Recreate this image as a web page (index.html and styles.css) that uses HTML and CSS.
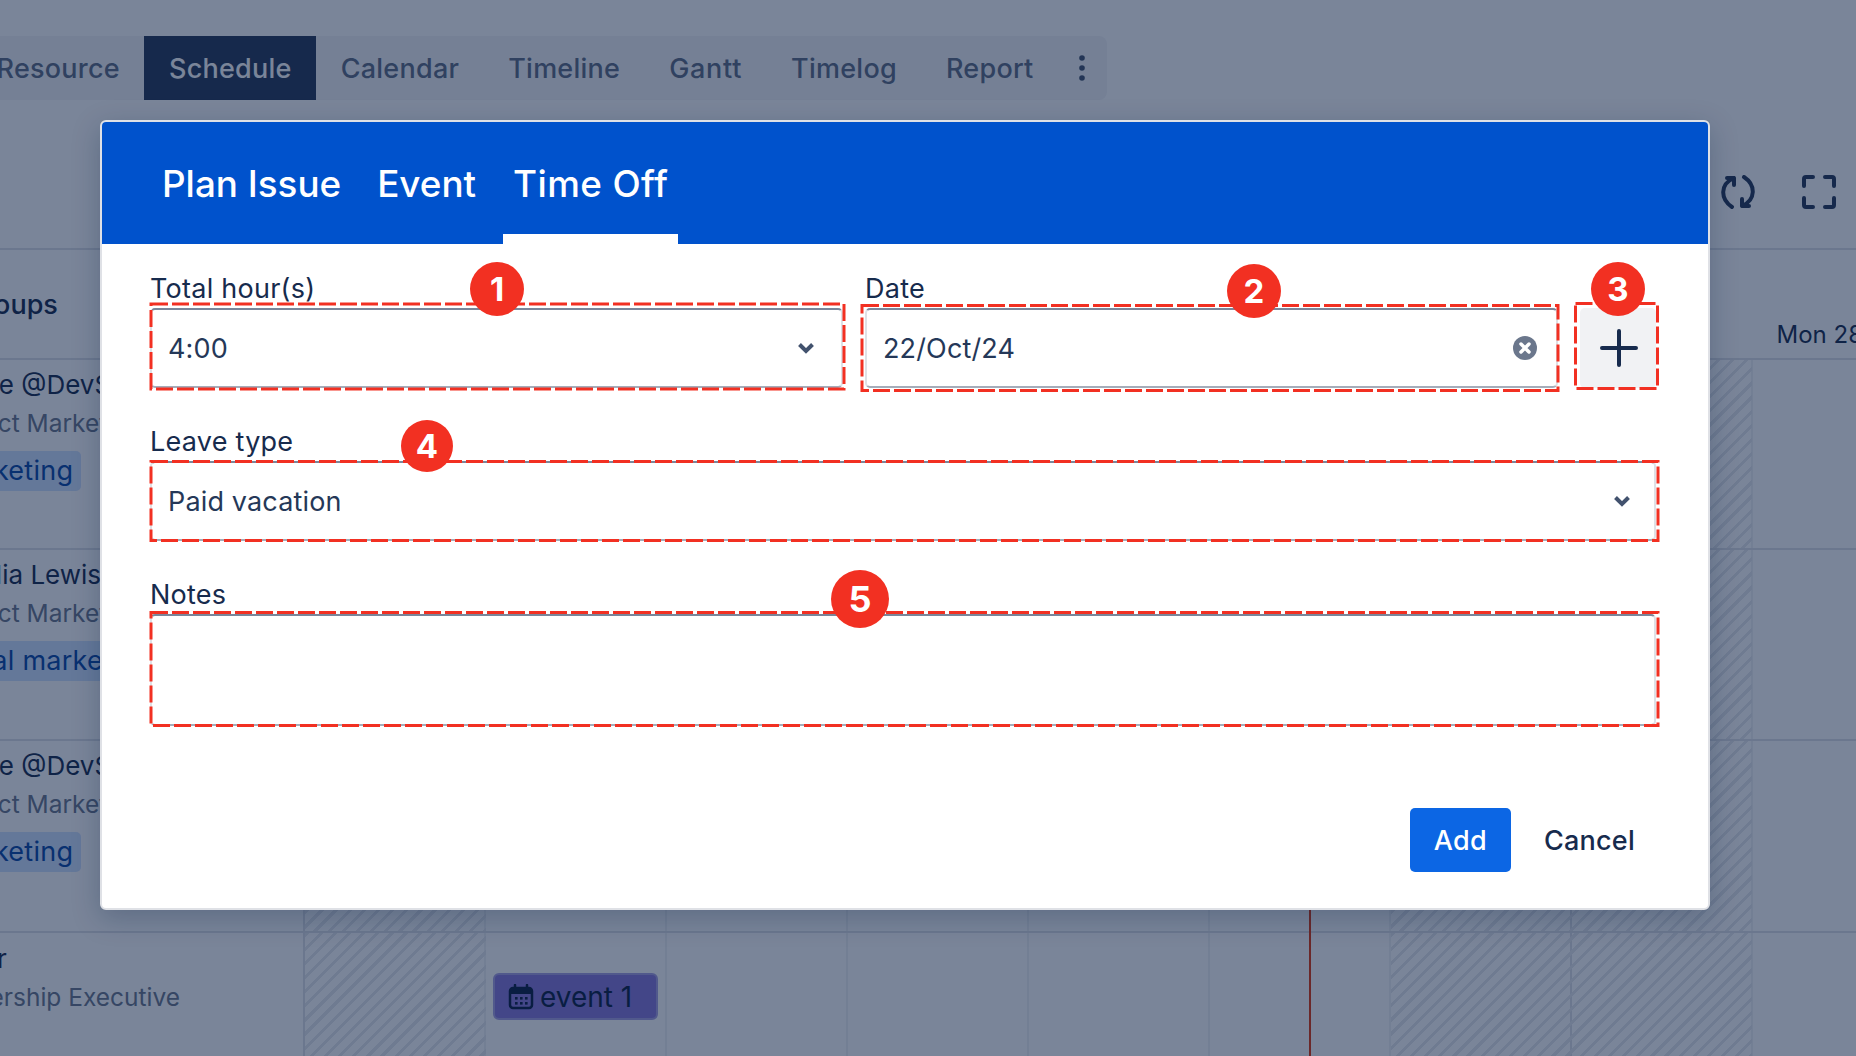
FILE: index.html
```html
<!DOCTYPE html>
<html lang="en">
<head>
<meta charset="utf-8">
<title>Plan Time Off</title>
<link rel="stylesheet" href="styles.css">
</head>
<body>
<div class="page">
  <nav class="nav">
    <a class="nav-item">Resource</a>
    <a class="nav-item active">Schedule</a>
    <a class="nav-item">Calendar</a>
    <a class="nav-item">Timeline</a>
    <a class="nav-item wide">Gantt</a>
    <a class="nav-item">Timelog</a>
    <a class="nav-item">Report</a>
    <svg class="nav-more" width="8" height="26" viewBox="0 0 8 26"><circle cx="4" cy="3" r="2.800"/><circle cx="4" cy="13" r="2.800"/><circle cx="4" cy="23" r="2.800"/></svg>
  </nav>
  <div class="controls">
    <svg class="ctl" width="34" height="34" viewBox="0 0 34 34"><path d="M6 3H13V10M13 3C-1 9-1 24 11 32"/><path d="M28 31H21V24M21 31C35 25 35 10 23 2"/></svg>
    <svg class="ctl" width="34" height="34" viewBox="0 0 34 34"><path d="M2 11V4a2 2 0 0 1 2-2h7M23 2h7a2 2 0 0 1 2 2v7M32 23v7a2 2 0 0 1-2 2h-7M11 32H4a2 2 0 0 1-2-2v-7"/></svg>
  </div>
  <div class="grid-head">
    <div class="head-left"><span class="groups">Groups</span></div>
    <div class="head-right"><span class="day-label">Mon 28</span></div>
  </div>
  <section class="row row-a">
    <div class="who"><div class="name">Jane @DevSamurai</div><div class="role">Product Marketing</div><span class="tag">Marketing</span></div>
    <div class="track"></div>
  </section>
  <section class="row row-b">
    <div class="who"><div class="name">Amelia Lewis</div><div class="role">Product Marketing</div><span class="tag">Digital marketing</span></div>
    <div class="track"></div>
  </section>
  <section class="row row-c">
    <div class="who"><div class="name">Jane @DevSamurai</div><div class="role">Product Marketing</div><span class="tag">Marketing</span></div>
    <div class="track"></div>
  </section>
  <section class="row row-d">
    <div class="who last"><div class="name">Peter</div><div class="role">Partnership Executive</div></div>
    <div class="track">
      <span class="chip">
        <svg width="26" height="26" viewBox="0 0 26 26"><path class="cal" d="M7 1v4M19 1v4"/><rect class="cal" x="2" y="4" width="22" height="20" rx="3"/><rect class="cal-fill" x="2" y="4" width="22" height="6"/><g class="cal-dots"><rect x="7" y="13" width="2.6" height="2.6"/><rect x="12" y="13" width="2.6" height="2.6"/><rect x="17" y="13" width="2.6" height="2.6"/><rect x="7" y="18" width="2.6" height="2.6"/><rect x="12" y="18" width="2.6" height="2.6"/><rect x="17" y="18" width="2.6" height="2.6"/></g></svg>
        event 1
      </span>
    </div>
  </section>
  <div class="today"></div>

  <div class="blanket"></div>

  <div class="modal">
    <header class="modal-head">
      <span class="tab">Plan Issue</span>
      <span class="tab">Event</span>
      <span class="tab current">Time Off</span>
    </header>
    <form class="modal-body">
      <div class="line-one">
        <div class="group">
          <label class="label">Total hour(s)</label>
          <div class="field"><span>4:00</span><svg class="chev" width="18" height="12" viewBox="0 0 18 12"><path d="M2.500 2.500 9 9l6.500-6.500"/></svg></div>
        </div>
        <div class="group">
          <label class="label">Date</label>
          <div class="field date"><span>22/Oct/24</span><svg class="clear" width="24" height="24" viewBox="0 0 24 24"><circle cx="12" cy="12" r="12"/><path d="M8 8l8 8M16 8l-8 8"/></svg></div>
        </div>
        <button type="button" class="plus"><svg width="38" height="38" viewBox="0 0 38 38"><path d="M19 2v34M2 19h34"/></svg></button>
      </div>
      <div class="group spaced">
        <label class="label">Leave type</label>
        <div class="field leave"><span>Paid vacation</span><svg class="chev" width="18" height="12" viewBox="0 0 18 12"><path d="M2.500 2.500 9 9l6.500-6.500"/></svg></div>
      </div>
      <div class="group spaced">
        <label class="label">Notes</label>
        <div class="notes"></div>
      </div>
      <div class="actions">
        <button type="button" class="btn primary">Add</button>
        <button type="button" class="btn link">Cancel</button>
      </div>
    </form>
  </div>

  <svg class="marks" width="1856" height="1056" viewBox="0 0 1856 1056">
    <rect x="151" y="304" width="693" height="85"/>
    <rect x="862" y="305.500" width="696" height="85"/>
    <rect x="1575.500" y="303.500" width="82" height="85"/>
    <rect x="151" y="461.500" width="1507" height="79"/>
    <rect x="151" y="612.500" width="1507" height="113"/>
  </svg>
  <span class="badge b1">1</span>
  <span class="badge b2">2</span>
  <span class="badge b3">3</span>
  <span class="badge b4">4</span>
  <span class="badge b5">5</span>
</div>
</body>
</html>
```
FILE: styles.css
```css
* { box-sizing: border-box; }
html, body { margin: 0; padding: 0; }
body { font-family: Inter, "Liberation Sans", sans-serif; color: #172b4d; background: #fff; }
.page { position: relative; width: 1856px; height: 1056px; overflow: hidden; background: #fff; }

/* backdrop page */
.nav { display: flex; align-items: center; width: 1107px; height: 64px; margin-top: 36px; background: #f4f5f7; border-radius: 0 8px 8px 0; overflow: hidden; }
.nav-item { flex: none; height: 64px; line-height: 66px; padding: 0 24.500px; font-size: 27px; letter-spacing: .25px; font-weight: 500; color: #5e6c84; }
.nav-item:first-child { margin-left: -28px; }
.nav-item.active { background: #253858; color: #fff; }
.nav-item.wide { letter-spacing: .7px; }
.nav-more { margin-left: 20px; fill: #42526e; }
.controls { display: flex; justify-content: flex-end; align-items: center; gap: 47px; height: 150px; padding: 35px 20px 0 0; border-bottom: 2px solid #dfe1e6; }
.ctl { fill: none; stroke: #253858; stroke-width: 4; stroke-linecap: round; stroke-linejoin: round; }
.grid-head { display: grid; grid-template-columns: 305px 1fr; height: 110px; border-bottom: 2px solid #dfe1e6; }
.head-left { padding: 38px 0 0; overflow: hidden; border-right: 2px solid #dfe1e6; }
.groups { display: block; margin-left: -36px; font-size: 27px; font-weight: 500; }
.head-right { display: flex; justify-content: flex-end; padding-top: 70px; overflow: hidden; }
.day-label { font-size: 24px; white-space: nowrap; margin-right: -7px; }
.row { display: grid; grid-template-columns: 305px 1fr; border-bottom: 2px solid #dfe1e6; }
.row-a { height: 190px; }
.row-b { height: 191px; }
.row-c { height: 192px; }
.row-d { height: 123px; border-bottom: 0; }
.who { padding-top: 7px; overflow: hidden; white-space: nowrap; border-right: 2px solid #dfe1e6; }
.name { font-size: 26px; line-height: 36px; margin-left: -46px; }
.row-b .name { margin-left: -60px; }
.role { font-size: 24.500px; line-height: 36px; margin-top: 2px; margin-left: -71px; color: #6b778c; }
.tag { display: inline-block; margin-top: 10px; margin-left: -65px; padding: 0 8px; height: 40px; line-height: 40px; font-size: 27px; letter-spacing: .25px; border-radius: 5px; background: #d0e2ff; color: #0747a6; }
.row-b .tag { margin-left: -75px; }
.who.last { padding-top: 8px; }
.who.last .name { margin-left: -58px; }
.who.last .role { margin-left: -72px; }
.track {
  background-image:
    repeating-linear-gradient(135deg, #e8e9ed 0 3px, transparent 3px 10px),
    repeating-linear-gradient(135deg, #e8e9ed 0 3px, transparent 3px 10px),
    linear-gradient(#dfe1e6, #dfe1e6),
    repeating-linear-gradient(90deg, transparent 0 179px, #f0f1f4 179px 181px);
  background-size: 181px 100%, 361px 100%, 2px 100%, 100% 100%;
  background-position: 0 0, 1086px 0, 1265px 0, 0 0;
  background-repeat: no-repeat;
}
.chip { display: inline-flex; align-items: center; gap: 6px; height: 47px; margin: 40px 0 0 188px; padding: 0 24px 0 13px; font-size: 28px; border-radius: 6px; background: #8777d9; border: 2px solid #a79fe3; color: #091e42; }
.chip svg { flex: none; }
.cal { fill: none; stroke: #091e42; stroke-width: 2.500; stroke-linecap: round; }
.cal-fill { fill: #091e42; }
.cal-dots { fill: #091e42; }
.today { position: absolute; left: 1309px; top: 250px; bottom: 0; width: 2px; background: #de350b; }

.blanket { position: absolute; inset: 0; background: rgba(9, 30, 66, .54); }

/* dialog */
.modal { position: absolute; left: 100px; top: 120px; width: 1610px; height: 790px; background: #fff; border: 2px solid #dfe1e6; border-radius: 6px; overflow: hidden; box-shadow: 0 8px 28px rgba(9, 30, 66, .25); }
.modal-head { display: flex; gap: 16px; height: 122px; padding-left: 50px; background: #0052cc; }
.tab { display: flex; align-items: center; padding: 10px 10px 0; font-size: 36.800px; font-weight: 500; color: #fff; border-bottom: 10px solid transparent; }
.tab.current { margin-left: 1px; letter-spacing: .4px; border-bottom-color: #fff; }
.modal-body { display: block; padding: 29px 52px 0 48px; }
.line-one { display: grid; grid-template-columns: 693px 693px 76px; column-gap: 22px; align-items: end; }
.group { display: block; }
.spaced { margin-top: 38px; }
.label { display: block; height: 32px; line-height: 32px; margin-bottom: 3px; font-size: 27px; letter-spacing: .25px; color: #172b4d; }
.field { display: flex; align-items: center; justify-content: space-between; height: 80px; padding: 0 26px 0 16px; font-size: 27px; letter-spacing: .15px; background: #fff; border: 2px solid #dfe1e6; border-top-color: #7a869a; border-bottom-color: #a5adba; border-radius: 5px; color: #253858; }
.field.date { padding-right: 19px; }
.field.leave { padding-right: 23px; }
.chev { fill: none; stroke: #42526e; stroke-width: 4; }
.clear circle { fill: #6b778c; }
.clear path { fill: none; stroke: #fff; stroke-width: 3.500; stroke-linecap: round; }
.plus { display: flex; align-items: center; justify-content: center; height: 80px; padding: 0 0 0 2px; border: 0; border-radius: 5px; background: #f1f2f4; }
.plus path { fill: none; stroke: #172b4d; stroke-width: 4; stroke-linecap: round; }
.notes { height: 112px; border: 2px solid #dfe1e6; border-top-color: #7a869a; border-bottom-color: #a5adba; border-radius: 5px; }
.actions { display: flex; justify-content: flex-end; gap: 9px; margin: 82px 0 0 0; }
.btn { height: 64px; padding: 0 24px; border: 0; border-radius: 5px; font: 500 27px Inter, "Liberation Sans", sans-serif; letter-spacing: .25px; }
.btn.primary { width: 101px; padding: 0; background: #0c66e4; color: #fff; }
.btn.link { padding-right: 21px; background: transparent; color: #172b4d; }

/* annotations */
.marks { position: absolute; left: 0; top: 0; pointer-events: none; }
.marks rect { fill: none; stroke: #f23022; stroke-width: 3; stroke-dasharray: 17 4; }
.badge { position: absolute; display: flex; align-items: center; justify-content: center; width: 54px; height: 54px; border-radius: 50%; background: #f23022; color: #fff; font-size: 33px; font-weight: 700; }
.b1 { left: 470px; top: 262px; }
.b2 { left: 1227px; top: 264px; }
.b3 { left: 1591px; top: 262px; }
.b4 { left: 401px; top: 420px; width: 52px; height: 52px; }
.b5 { left: 831px; top: 570px; width: 58px; height: 58px; font-size: 36px; }
```
